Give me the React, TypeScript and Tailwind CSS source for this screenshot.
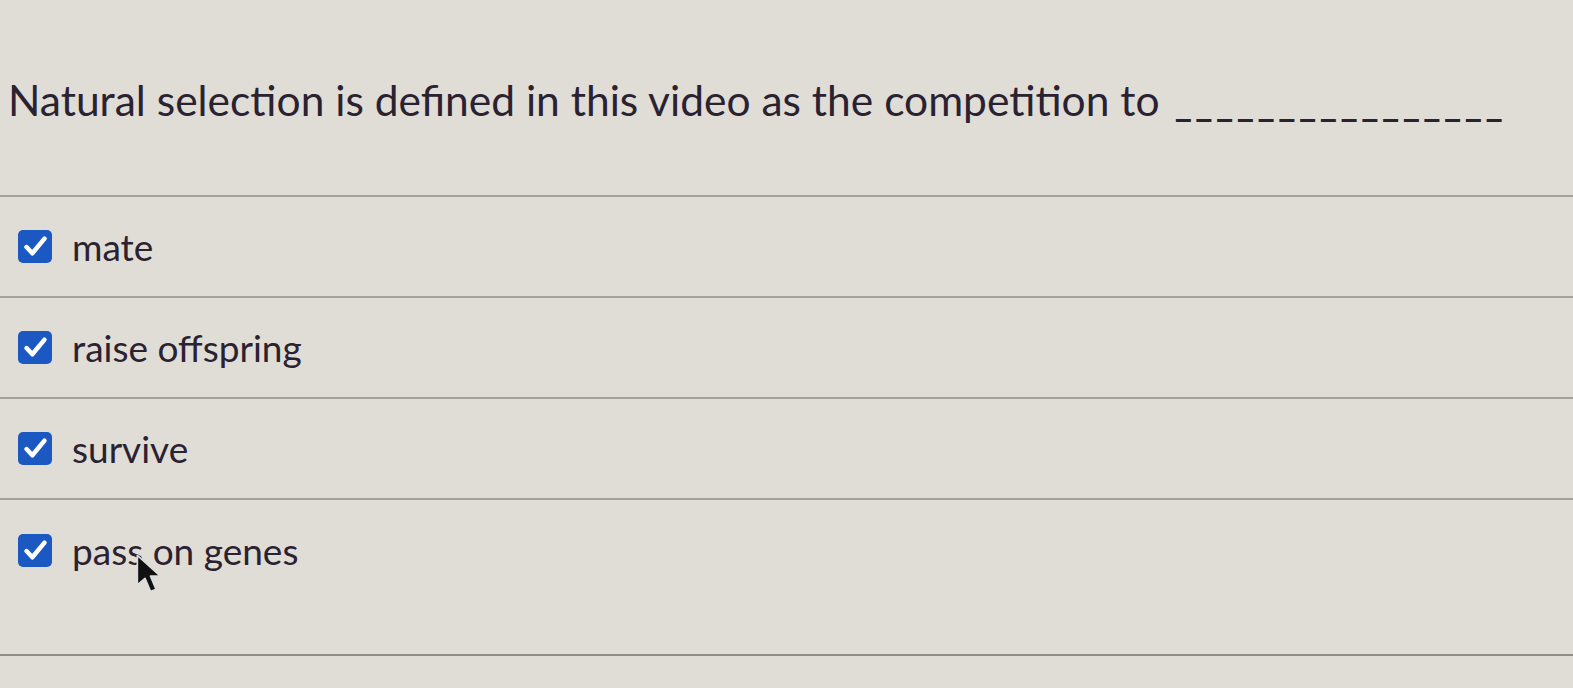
import React from "react";

const options = ["mate", "raise offspring", "survive", "pass on genes"];

function CheckBox() {
  return (
    <span className="flex h-[33px] w-[34px] shrink-0 items-center justify-center rounded-[5px] bg-[#1c58c2]">
      <svg className="h-[27px] w-[27px]" viewBox="0 0 24 24" fill="none" stroke="white" strokeWidth={4} strokeLinecap="round" strokeLinejoin="round">
        <path d="M4 12.5l5.2 5.5L20 5" />
      </svg>
    </span>
  );
}

function Cursor() {
  return (
    <svg className="absolute left-[134px] top-[552px] h-[46px] w-[33px]" viewBox="0 0 30 42">
      <path d="M3 3 L3 30 L10 24 L15 36 L20 34 L15 22 L24 22 Z" fill="#111" stroke="#ddd" strokeWidth={1.5} strokeLinejoin="round" />
    </svg>
  );
}

export default function App() {
  return (
    <div
      className="relative h-[688px] w-[1573px] overflow-hidden bg-[#dfddd6] text-[#2b2231]"
      style={{ fontFamily: "Lato, 'Open Sans', sans-serif" }}
    >
      <div className="flex h-[195px] items-start pl-[8px] pt-[76px]">
        <p className="text-[42.5px] leading-[48px]">
          Natural selection is defined in this video as the competition to{" "}
          <span className="ml-[4px] text-[38px] font-bold tracking-[3px]">________________</span>
        </p>
      </div>
      <div className="border-t-2 border-[#a3a19c]">
        {options.map((o, i) => (
          <div
            key={o}
            className={`flex gap-[20px] pl-[18px] ${i < options.length - 1 ? "h-[101px] items-center border-b-2 border-[#a3a19c]" : "h-[156px] items-start pt-[34px] border-b-2 border-[#8f8d89]"}`}
          >
            <CheckBox />
            <span className="text-[37px] leading-[34px]">{o}</span>
          </div>
        ))}
      </div>
      <Cursor />
    </div>
  );
}
